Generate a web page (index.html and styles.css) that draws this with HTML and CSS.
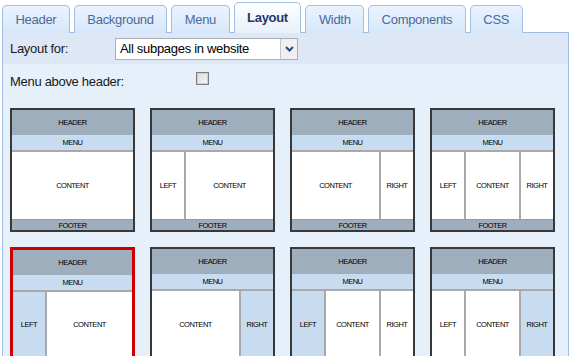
FILE: index.html
```html
<!DOCTYPE html>
<html lang="en">
<head>
  <meta charset="UTF-8" />
  <title>Layout settings</title>
  <link rel="stylesheet" href="styles.css">
</head>
<body>
  <div class="tabs">
    <div class="tab">Header</div>
    <div class="tab">Background</div>
    <div class="tab">Menu</div>
    <div class="tab active">Layout</div>
    <div class="tab">Width</div>
    <div class="tab">Components</div>
    <div class="tab">CSS</div>
  </div>

  <div class="panel">
    <div class="row row-for">
      <label class="label">Layout for:</label>
      <div class="select">
        <span class="select-text">All subpages in website</span>
        <span class="select-btn">
          <svg width="9" height="6" viewBox="0 0 9 6"><path d="M1 1 L4.5 4.5 L8 1" fill="none" stroke="#2b4a7e" stroke-width="2"/></svg>
        </span>
      </div>
    </div>

    <div class="row row-menu">
      <label class="label label-wide">Menu above header:</label>
      <input type="checkbox" class="check">
    </div>

    <div class="thumbs">
      <!-- row 1: no coloured side columns -->
      <div class="thumb">
        <div class="t-head">HEADER</div>
        <div class="t-menu">MENU</div>
        <div class="t-body"><div class="t-main">CONTENT</div></div>
        <div class="t-foot">FOOTER</div>
      </div>
      <div class="thumb">
        <div class="t-head">HEADER</div>
        <div class="t-menu">MENU</div>
        <div class="t-body"><div class="t-side left">LEFT</div><div class="t-main">CONTENT</div></div>
        <div class="t-foot">FOOTER</div>
      </div>
      <div class="thumb">
        <div class="t-head">HEADER</div>
        <div class="t-menu">MENU</div>
        <div class="t-body"><div class="t-main">CONTENT</div><div class="t-side right">RIGHT</div></div>
        <div class="t-foot">FOOTER</div>
      </div>
      <div class="thumb">
        <div class="t-head">HEADER</div>
        <div class="t-menu">MENU</div>
        <div class="t-body"><div class="t-side left">LEFT</div><div class="t-main">CONTENT</div><div class="t-side right">RIGHT</div></div>
        <div class="t-foot">FOOTER</div>
      </div>

      <!-- row 2: side columns in menu colour -->
      <div class="thumb selected">
        <div class="t-head">HEADER</div>
        <div class="t-menu">MENU</div>
        <div class="t-body"><div class="t-side left on">LEFT</div><div class="t-main">CONTENT</div></div>
        <div class="t-foot">FOOTER</div>
      </div>
      <div class="thumb">
        <div class="t-head">HEADER</div>
        <div class="t-menu">MENU</div>
        <div class="t-body"><div class="t-main">CONTENT</div><div class="t-side right on">RIGHT</div></div>
        <div class="t-foot">FOOTER</div>
      </div>
      <div class="thumb">
        <div class="t-head">HEADER</div>
        <div class="t-menu">MENU</div>
        <div class="t-body"><div class="t-side left on">LEFT</div><div class="t-main">CONTENT</div><div class="t-side right">RIGHT</div></div>
        <div class="t-foot">FOOTER</div>
      </div>
      <div class="thumb">
        <div class="t-head">HEADER</div>
        <div class="t-menu">MENU</div>
        <div class="t-body"><div class="t-side left">LEFT</div><div class="t-main">CONTENT</div><div class="t-side right on">RIGHT</div></div>
        <div class="t-foot">FOOTER</div>
      </div>
    </div>
  </div>
</body>
</html>
```

FILE: styles.css
```css
body {
  margin: 0;
  background: #ffffff;
  font-family: "Liberation Sans", Arial, sans-serif;
  font-size: 13px;
  letter-spacing: -0.3px;
  color: #1a1a1a;
}
.tabs {
  display: flex;
  align-items: flex-end;
  gap: 4px;
  padding: 5px 0 0 2px;
  height: 28px;
  margin-bottom: -1px;
  position: relative;
}
.tab {
  height: 27px;
  line-height: 27px;
  padding: 0 12.5px;
  border: 1px solid #a3bfe4;
  border-bottom: none;
  border-radius: 5px 5px 0 0;
  background: linear-gradient(#eaf3fe, #d6e7fb);
  color: #4d6a98;
}
.tab.active {
  height: 30px;
  line-height: 30px;
  margin-top: -3px;
  background: linear-gradient(#ffffff, #e8f0fb);
  color: #1d3766;
  font-weight: bold;
}
.panel {
  margin: 0 1px 0 2px;
  border: 1px solid #9fbde4;
  background: #e6f0fb;
  height: 400px;
}
.row {
  display: flex;
  align-items: center;
  padding-left: 7px;
}
.row-for {
  height: 31px;
  background: #dde7f5;
}
.row-menu {
  height: 34px;
}
.label {
  width: 105px;
}
.label-wide {
  width: 186px;
}
.select {
  display: flex;
  width: 181px;
  height: 20px;
  border: 1px solid #a9afb8;
  background: #ffffff;
}
.select-text {
  flex: 1;
  line-height: 20px;
  padding-left: 4px;
  color: #000;
}
.select-btn {
  width: 16px;
  border-left: 1px solid #c3c7cd;
  background: #f0f0f0;
  display: flex;
  align-items: center;
  justify-content: center;
}
.check {
  appearance: none;
  margin: -5px 0 0 0;
  width: 13px;
  height: 13px;
  border: 1px solid #7d7d7d;
  box-shadow: inset 0 0 0 1px #cfcfcf;
  background: linear-gradient(135deg, #dcdcdc, #f8f8f8);
}
.thumbs {
  display: grid;
  grid-template-columns: repeat(4, 125px);
  grid-auto-rows: 124px;
  column-gap: 15px;
  row-gap: 15px;
  padding: 10px 7px;
}
.thumb {
  display: flex;
  flex-direction: column;
  border: 2px solid #383838;
  font-size: 7.5px;
  letter-spacing: -0.5px;
  color: #000;
  text-align: center;
  overflow: hidden;
}
.thumb.selected {
  border: 3px solid #cc0000;
}
.t-head {
  height: 25px;
  line-height: 25px;
  background: #9eaebd;
}
.t-menu {
  height: 15px;
  line-height: 15px;
  background: #c7dcf0;
  border-bottom: 2px solid #aca8a8;
}
.t-body {
  flex: 1;
  display: flex;
  background: #ffffff;
}
.t-main {
  flex: 1;
  display: flex;
  align-items: center;
  justify-content: center;
}
.t-side {
  width: 32px;
  display: flex;
  align-items: center;
  justify-content: center;
}
.t-side.left {
  border-right: 2px solid #a9a9a9;
}
.t-side.right {
  border-left: 2px solid #a9a9a9;
}
.t-side.on {
  background: #c7dcf0;
}
.t-foot {
  height: 10px;
  line-height: 11px;
  background: #9eaebd;
  border-top: 1px solid #8f9dab;
}
```
